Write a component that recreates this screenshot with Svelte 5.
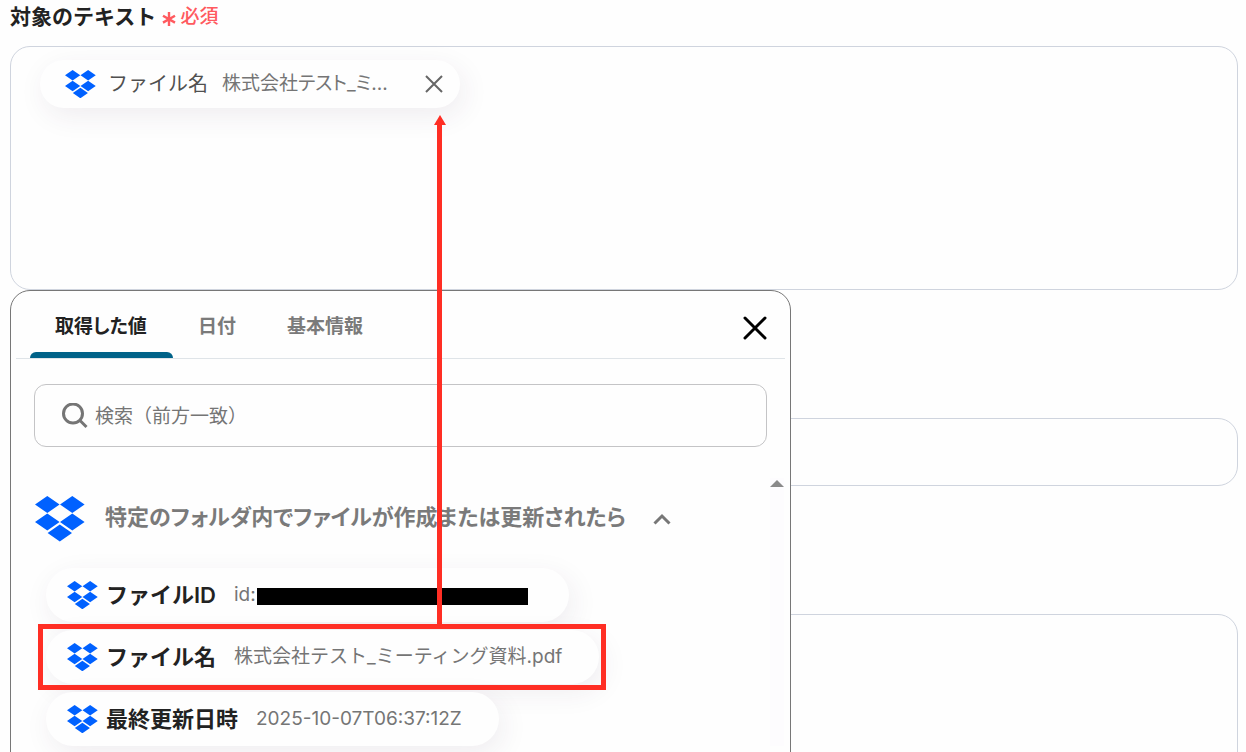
<script lang="ts">
    type Value = { name: string; value: string; masked?: boolean; picked?: boolean };

    const tabs = ["取得した値", "日付", "基本情報"];

    const values: Value[] = [
        { name: "ファイルID", value: "id:", masked: true },
        { name: "ファイル名", value: "株式会社テスト_ミーティング資料.pdf", picked: true },
        { name: "最終更新日時", value: "2025-10-07T06:37:12Z" },
    ];

    let active = $state(0);
    let query = $state("");
</script>

{#snippet logo()}
    <svg class="logo" viewBox="0 0 50 46" aria-hidden="true">
        <path d="M12.3 0 24.6 8.5 12.3 17 0 8.5zM37.3 0 49.6 8.5 37.3 17 25 8.5zM12.3 17.4 24.6 25.9 12.3 34.4 0 25.9zM37.3 17.4 49.6 25.9 37.3 34.4 25 25.9zM24.8 28.6 37 37.1 24.8 45.6 12.6 37.1z" />
    </svg>
{/snippet}

<div class="page">
    <div class="heading">
        <span class="title" id="target-label">対象のテキスト</span>
        <svg class="asterisk" viewBox="0 0 14 14" aria-hidden="true">
            <path d="M7 0v14M1 3.8l12 6.8M13 3.8 1 10.6" />
        </svg>
        <span class="required">必須</span>
    </div>

    <div class="target">
        <div class="editor" role="group" aria-labelledby="target-label">
            <div class="chip inserted">
                {@render logo()}
                <span class="name">ファイル名</span>
                <span class="value">株式会社テスト_ミ...</span>
                <button class="remove" type="button" aria-label="削除">
                    <svg viewBox="0 0 18 18"><path d="M1 1l16 16M17 1 1 17" /></svg>
                </button>
            </div>
        </div>

        <div class="popup">
            <div class="tabs">
                {#each tabs as tab, i}
                    <button class="tab" class:active={active === i} type="button" onclick={() => (active = i)}>{tab}</button>
                {/each}
                <button class="close" type="button" aria-label="閉じる">
                    <svg viewBox="0 0 24 24"><path d="M2 2l20 20M22 2 2 22" /></svg>
                </button>
            </div>

            <label class="search">
                <svg viewBox="0 0 26 26" aria-hidden="true">
                    <circle cx="11" cy="10.5" r="9.5" />
                    <path d="M17.5 17 24.5 24" />
                </svg>
                <input type="text" placeholder="検索（前方一致）" bind:value={query} />
            </label>

            <div class="results">
                <div class="list">
                    <button class="group" type="button">
                        {@render logo()}
                        <span>特定のフォルダ内でファイルが作成または更新されたら</span>
                        <svg class="chevron" viewBox="0 0 18 12" aria-hidden="true"><path d="M1.5 10.5 9 3l7.5 7.5" /></svg>
                    </button>
                    {#each values as item}
                        <button class="chip" class:picked={item.picked} type="button">
                            {@render logo()}
                            <span class="name">{item.name}</span>
                            <span class="value">{item.value}</span>
                            {#if item.masked}<span class="mask"></span>{/if}
                        </button>
                    {/each}
                </div>
                <div class="scrollbar">
                    <svg viewBox="0 0 14 8" aria-hidden="true"><path d="M7 0l7 7H0z" /></svg>
                </div>
            </div>
        </div>
    </div>

    <input class="field" type="text" aria-label="テキスト" />
    <textarea class="field tall" aria-label="テキスト"></textarea>

    <svg class="arrow" viewBox="0 0 12 510" aria-hidden="true">
        <path d="M6 0l6 10H0z" />
        <path d="M3 9h5v501H3z" />
    </svg>
</div>

<style>
    :global(body) {
        background: #fefefe;
    }

    .page {
        position: relative;
        box-sizing: border-box;
        height: 100vh;
        overflow: hidden;
        padding: 3px 8px 0 10px;
        font-family: Inter, "Noto Sans CJK JP", sans-serif;
        line-height: 24px;
        color: #222;
    }

    button, input, textarea {
        box-sizing: border-box;
        margin: 0;
        padding: 0;
        border: 0;
        background: none;
        font-family: inherit;
        line-height: inherit;
        color: inherit;
    }

    svg {
        display: block;
        flex: none;
    }

    .heading {
        display: flex;
        align-items: center;
        height: 28px;
        margin-bottom: 15px;
    }

    .title {
        font-size: 21px;
        font-weight: 600;
    }

    .asterisk {
        width: 14px;
        margin: 3px 4px 0 6px;
        fill: none;
        stroke: #ff5a5f;
        stroke-width: 2.4;
    }

    .required {
        font-size: 19px;
        font-weight: 500;
        color: #ff5a5f;
    }

    .target {
        position: relative;
    }

    .editor {
        box-sizing: border-box;
        height: 244px;
        padding: 13px 29px;
        border: 1px solid #cfd4de;
        border-radius: 20px;
    }

    .chip {
        position: relative;
        display: flex;
        align-items: center;
        width: fit-content;
        height: 54px;
        padding: 0 37px 0 21px;
        border-radius: 27px;
        background: #fefefe;
        box-shadow: 4px 8px 28px rgba(60, 40, 80, 0.08);
        white-space: nowrap;
    }

    .chip .logo {
        width: 31px;
    }

    .name {
        margin: 0 18px 0 8px;
        font-size: 22px;
        font-weight: 600;
    }

    .value {
        font-size: 19px;
        color: #757575;
    }

    .inserted {
        box-sizing: border-box;
        width: 420px;
        height: 48px;
        padding: 0 17px 0 25px;
    }

    .inserted .name {
        margin: 0 14px 0 12px;
        font-size: 20px;
        font-weight: 400;
        color: #505050;
    }

    .inserted .value {
        font-feature-settings: "palt";
    }

    .remove {
        margin-left: auto;
    }

    .remove svg {
        width: 18px;
        fill: none;
        stroke: #666;
        stroke-width: 2;
    }

    .popup {
        position: absolute;
        top: 100%;
        left: 0;
        z-index: 1;
        box-sizing: border-box;
        width: 781px;
        max-width: 100%;
        height: 600px;
        border: 1px solid #777;
        border-radius: 20px;
        background: #fefefe;
    }

    .tabs {
        display: flex;
        height: 67px;
        margin: 0 5px;
        padding: 0 18px 0 14px;
        border-bottom: 1px solid #dfe4e8;
    }

    .tab {
        position: relative;
        padding: 5px 26px 0 25px;
        font-size: 19px;
        font-weight: 600;
        font-feature-settings: "palt";
        color: #7a7a7a;
    }

    .tab.active {
        color: #222;
    }

    .tab.active::after {
        content: "";
        position: absolute;
        left: 0;
        right: 0;
        bottom: 0;
        height: 6px;
        border-radius: 6px 6px 0 0;
        background: #006288;
    }

    .close {
        margin-left: auto;
        padding-top: 6px;
        color: #000;
    }

    .close svg {
        width: 24px;
        fill: none;
        stroke: currentColor;
        stroke-width: 3;
        stroke-linecap: round;
    }

    .search {
        display: flex;
        align-items: center;
        box-sizing: border-box;
        height: 63px;
        margin: 25px 23px 0;
        padding: 0 27px;
        border: 1px solid #c4c4c6;
        border-radius: 12px;
    }

    .search svg {
        width: 26px;
        fill: none;
        stroke: #757575;
        stroke-width: 3;
    }

    .search input {
        flex: 1;
        height: 40px;
        margin-left: 7px;
        padding-top: 2px;
        font-size: 19px;
        outline: none;
    }

    .search input::placeholder {
        color: #757575;
        opacity: 1;
    }

    .results {
        display: flex;
        margin: 31px 6px 0 24px;
    }

    .list {
        display: flex;
        flex: 1;
        flex-direction: column;
        gap: 8px;
        padding-top: 14px;
    }

    .list .chip {
        margin-left: 11px;
    }

    .group {
        display: flex;
        align-items: center;
        height: 54px;
        margin-bottom: 14px;
        font-size: 22px;
        font-weight: 600;
        font-feature-settings: "palt";
        color: #7a7a7a;
    }

    .group .logo {
        width: 50px;
    }

    .group span {
        margin: 0 27px 4px 20px;
    }

    .logo {
        fill: #0061ff;
    }

    .chevron {
        width: 18px;
        fill: none;
        stroke: #777;
        stroke-width: 3;
    }

    .mask {
        width: 271px;
        height: 17px;
        margin: 2px 4px 0 1px;
        background: #000;
    }

    .picked::after {
        content: "";
        position: absolute;
        inset: -6px -7px -6px -8px;
        border: 5px solid #ff2e24;
    }

    .scrollbar {
        width: 14px;
        padding-top: 2px;
        background: #fdfcfe;
    }

    .scrollbar svg {
        width: 14px;
        fill: #8a8a8a;
    }

    .field {
        display: block;
        width: 100%;
        height: 68px;
        margin-top: 128px;
        padding: 0 24px;
        border: 1px solid #cfd4de;
        border-radius: 20px;
    }

    .tall {
        height: 244px;
        padding: 24px;
        resize: none;
    }

    /* runs from the picked value up to the chip in the editor */
    .arrow {
        position: absolute;
        top: 115px;
        left: 434px;
        z-index: 2;
        width: 12px;
        height: 510px;
        fill: #ff2e24;
    }
</style>
